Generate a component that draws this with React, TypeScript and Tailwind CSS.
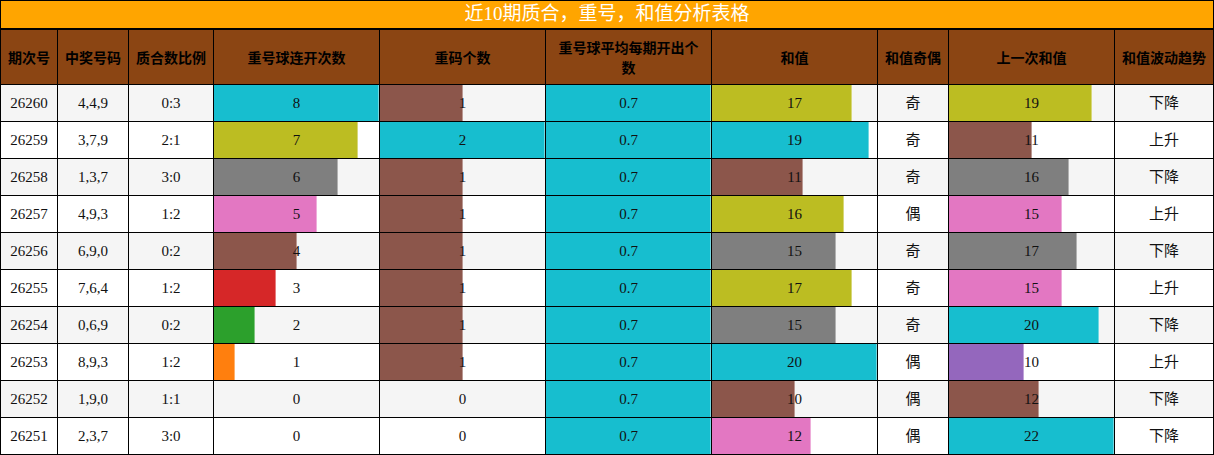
import React from "react";

type Bar = { v: number; max: number; color: string; label?: string };

const C = {
  cyan: "bg-[#17becf]",
  olive: "bg-[#bcbd22]",
  gray: "bg-[#7f7f7f]",
  pink: "bg-[#e377c2]",
  brown: "bg-[#8c564b]",
  red: "bg-[#d62728]",
  green: "bg-[#2ca02c]",
  orange: "bg-[#ff7f0e]",
  purple: "bg-[#9467bd]",
};

const headers = [
  "期次号",
  "中奖号码",
  "质合数比例",
  "重号球连开次数",
  "重码个数",
  "重号球平均每期开出个数",
  "和值",
  "和值奇偶",
  "上一次和值",
  "和值波动趋势",
];

// [期次号, 号码, 比例, 连开, 连开色, 重码, 重码色, 和值, 和值色, 奇偶, 上次, 上次色, 趋势]
const rows: [number, string, string, number, string, number, string, number, string, string, number, string, string][] = [
  [26260, "4,4,9", "0:3", 8, C.cyan, 1, C.brown, 17, C.olive, "奇", 19, C.olive, "下降"],
  [26259, "3,7,9", "2:1", 7, C.olive, 2, C.cyan, 19, C.cyan, "奇", 11, C.brown, "上升"],
  [26258, "1,3,7", "3:0", 6, C.gray, 1, C.brown, 11, C.brown, "奇", 16, C.gray, "下降"],
  [26257, "4,9,3", "1:2", 5, C.pink, 1, C.brown, 16, C.olive, "偶", 15, C.pink, "上升"],
  [26256, "6,9,0", "0:2", 4, C.brown, 1, C.brown, 15, C.gray, "奇", 17, C.gray, "下降"],
  [26255, "7,6,4", "1:2", 3, C.red, 1, C.brown, 17, C.olive, "奇", 15, C.pink, "上升"],
  [26254, "0,6,9", "0:2", 2, C.green, 1, C.brown, 15, C.gray, "奇", 20, C.cyan, "下降"],
  [26253, "8,9,3", "1:2", 1, C.orange, 1, C.brown, 20, C.cyan, "偶", 10, C.purple, "上升"],
  [26252, "1,9,0", "1:1", 0, C.cyan, 0, C.brown, 10, C.brown, "偶", 12, C.brown, "下降"],
  [26251, "2,3,7", "3:0", 0, C.cyan, 0, C.brown, 12, C.pink, "偶", 22, C.cyan, "下降"],
];

function Cell({ bg, children }: { bg: string; children: React.ReactNode }) {
  return (
    <div className={`${bg} h-9 flex items-center justify-center text-[15px] text-[#111]`}>
      {children}
    </div>
  );
}

function BarCell({ bg, bar }: { bg: string; bar: Bar }) {
  const pct = bar.max ? (bar.v / bar.max) * 100 : 0;
  return (
    <div className={`${bg} relative h-9 flex items-center justify-center text-[15px] text-[#111]`}>
      {pct > 0 && (
        <div
          className={`${bar.color} absolute left-0 top-0 bottom-0 border-r border-white/40`}
          style={{ width: `${pct}%` }}
        />
      )}
      <span className="relative">{bar.label ?? bar.v}</span>
    </div>
  );
}

export default function App() {
  return (
    <div
      className="w-[1214px] h-[455px] bg-white"
      style={{ fontFamily: '"Liberation Serif", "Noto Sans CJK SC", serif' }}
    >
      <div className="h-[29px] border border-black bg-[#ffa500] flex items-center justify-center text-white text-[19px]">
        近10期质合，重号，和值分析表格
      </div>
      <div className="grid grid-cols-[56px_70px_84px_165px_165px_165px_165px_70px_165px_98px] gap-px bg-black p-px">
        {headers.map((h) => (
          <div
            key={h}
            className={`h-[54px] bg-[#8b4513] flex items-center justify-center text-center text-[14px] leading-5 font-bold text-black ${
              h.length > 8 ? "px-2" : "px-0"
            }`}
            style={{ fontFamily: '"Noto Sans CJK SC", sans-serif' }}
          >
            {h}
          </div>
        ))}
        {rows.map((r, i) => {
          const bg = i % 2 === 0 ? "bg-[#f5f5f5]" : "bg-white";
          return (
            <React.Fragment key={r[0]}>
              <Cell bg={bg}>{r[0]}</Cell>
              <Cell bg={bg}>{r[1]}</Cell>
              <Cell bg={bg}>{r[2]}</Cell>
              <BarCell bg={bg} bar={{ v: r[3], max: 8, color: r[4] }} />
              <BarCell bg={bg} bar={{ v: r[5], max: 2, color: r[6] }} />
              <BarCell bg={bg} bar={{ v: 1, max: 1, color: C.cyan, label: "0.7" }} />
              <BarCell bg={bg} bar={{ v: r[7], max: 20, color: r[8] }} />
              <Cell bg={bg}>{r[9]}</Cell>
              <BarCell bg={bg} bar={{ v: r[10], max: 22, color: r[11] }} />
              <Cell bg={bg}>{r[12]}</Cell>
            </React.Fragment>
          );
        })}
      </div>
    </div>
  );
}
